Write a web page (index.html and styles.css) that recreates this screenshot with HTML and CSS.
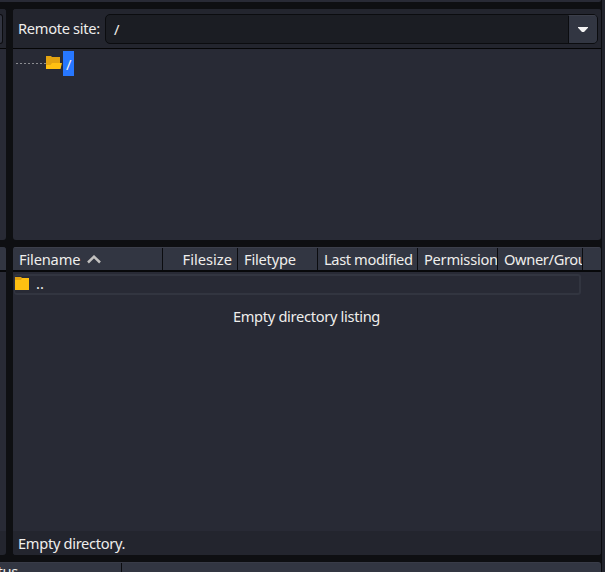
FILE: index.html
```
<!DOCTYPE html>
<html lang="en">
<head>
<meta charset="utf-8">
<title>Remote site</title>
<link rel="stylesheet" href="styles.css">
</head>
<body>
<div class="window">
  <div class="main">
    <div class="top-strip"></div>
    <div class="row tree-row">
      <div class="side"><div class="side-bar"><div class="side-button"></div></div></div>
      <section class="pane">
        <div class="site-bar">
          <span class="label">Remote site:</span>
          <div class="combo">
            <div class="combo-text">/</div>
            <div class="combo-button"><svg width="10" height="5" viewBox="0 0 10 5"><path d="M0 0h10v.8L6 5H4L0 .8z" fill="#f3f3f3"/></svg></div>
          </div>
        </div>
        <div class="tree">
          <div class="branch"></div>
          <svg class="open-folder" width="16" height="13" viewBox="0 0 16 13"><path d="M0 0h5l1 1h8v6h1L14 13H0z" fill="#e3a311"/><path d="M0 13V9h4.5L6 7h10L14.5 13z" fill="#ffc011"/></svg>
          <span class="selected">/</span>
        </div>
      </section>
    </div>
    <div class="row list-row">
      <div class="side side-list"><div class="side-head"></div></div>
      <section class="pane">
        <div class="header">
          <div class="cell name">Filename<svg width="14" height="9" viewBox="0 0 14 9"><path d="M1 7.5L7 1.7L13 7.5" fill="none" stroke="#c2c1bf" stroke-width="2.5"/></svg></div>
          <div class="cell size">Filesize</div>
          <div class="cell type">Filetype</div>
          <div class="cell modified">Last modified</div>
          <div class="cell perms">Permission</div>
          <div class="cell owner">Owner/Group</div>
          <div class="cell rest"></div>
        </div>
        <div class="listing">
          <div class="parent"><svg width="14" height="13" viewBox="0 0 14 13"><path d="M0 0h6l1 1h7v3H0z" fill="#e3a311"/><path d="M0 3h6l1-2h7v12H0z" fill="#ffc011"/></svg><span>..</span></div>
          <div class="empty">Empty directory listing</div>
        </div>
        <div class="status">Empty directory.</div>
      </section>
    </div>
    <div class="queue"><div class="queue-cell">Status</div></div>
  </div>
  <div class="edge"></div>
</div>
</body>
</html>
```
FILE: styles.css
```
* { box-sizing: border-box; }
body {
  margin: 0;
  background: #0e0f12;
  color: #efeeec;
  font: 14.67px/20px "Noto Sans", sans-serif;
  letter-spacing: -0.32px;
  overflow: hidden;
}
svg { display: block; flex: none; }
.window { display: flex; width: 605px; height: 572px; }
.main {
  display: flex;
  flex-direction: column;
  gap: 7px;
  width: 602px;
  border-right: 1px solid #0b0c0f;
}
.edge { width: 3px; background: #22242d; }
.top-strip { height: 2px; background: #282a35; border-radius: 0 0 3px 0; }
.row { display: flex; gap: 7px; }
.tree-row { height: 231px; }
.list-row { height: 308px; }
.side {
  width: 6px;
  background: #282a35;
  border-radius: 0 3px 3px 0;
  overflow: hidden;
}
.side-bar {
  height: 40px;
  padding-top: 5px;
  background: #23252e;
  border-bottom: 1px solid #050506;
}
.side-button {
  width: 3px;
  height: 30px;
  background: #313440;
  border: 1px solid #0b0c0f;
  border-left: 0;
  border-radius: 0 4px 4px 0;
}
.side-list { border-bottom: 24px solid #23252e; }
.side-head { height: 25px; background: #323642; border-bottom: 2px solid #07080a; }
.pane {
  display: flex;
  flex-direction: column;
  width: 588px;
  background: #282a35;
  border-radius: 3px;
  overflow: hidden;
}
.site-bar {
  display: flex;
  align-items: center;
  flex: none;
  height: 40px;
  padding: 0 3px 2px 5px;
  background: #23252e;
  border-bottom: 1px solid #050506;
}
.label { width: 87px; white-space: nowrap; }
.combo {
  display: flex;
  flex: 1;
  height: 30px;
  margin-top: 2px;
  background: #1b1d23;
  border: 1px solid #0b0c0f;
  border-radius: 5px;
  overflow: hidden;
}
.combo-text { flex: 1; padding: 4px 0 0 8px; }
.combo-button {
  display: flex;
  align-items: center;
  justify-content: center;
  width: 29px;
  background: #323642;
  border-left: 1px solid #0b0c0f;
  border-top: 1px solid #3b3e49;
}
.tree { display: flex; padding: 2px 0 0 3px; }
.branch {
  width: 30px;
  height: 1px;
  margin-top: 12px;
  background: repeating-linear-gradient(90deg, #8b8c91 0 2px, transparent 2px 4px);
}
.open-folder { margin-top: 5px; }
.selected {
  width: 11px;
  height: 25px;
  margin-left: 1px;
  padding-top: 3px;
  text-align: center;
  background: #2777ff;
}
.header {
  display: flex;
  flex: none;
  height: 25px;
  background: #323642;
  border-top: 1px solid #3c3f4b;
  border-bottom: 2px solid #07080a;
}
.cell {
  padding: 1px 0 0 6px;
  border-right: 1px solid #0b0c0f;
  white-space: nowrap;
  overflow: hidden;
}
.name { display: flex; gap: 7px; width: 150px; letter-spacing: -0.18px; }
.name svg { margin-top: 6px; }
.size { width: 75px; padding: 1px 5px 0 0; text-align: right; letter-spacing: 0; }
.type { width: 80px; letter-spacing: -0.22px; }
.modified { width: 100px; letter-spacing: -0.38px; }
.perms { width: 80px; letter-spacing: -0.26px; }
.owner { width: 85px; letter-spacing: -0.36px; }
.rest { flex: 1; border: 0; }
.listing { flex: 1; padding: 2px 0 0 1px; }
.parent {
  display: flex;
  gap: 7px;
  width: 567px;
  height: 21px;
  border: 2px solid #323540;
  border-left-width: 1px;
  border-radius: 3px;
}
.parent svg { margin-top: 1px; }
.parent span { margin-top: -3px; letter-spacing: 0; }
.empty { margin-top: 11px; padding-right: 2px; text-align: center; }
.status { height: 24px; padding: 2px 5px; background: #23252e; }
.queue { flex: 1; min-height: 0; background: #323642; border-top: 1px solid #393c48; border-radius: 0 3px 0 0; overflow: hidden; }
.queue-cell { width: 122px; height: 20px; line-height: 16px; text-indent: -23px; border-right: 1px solid #0b0c0f; }
```
